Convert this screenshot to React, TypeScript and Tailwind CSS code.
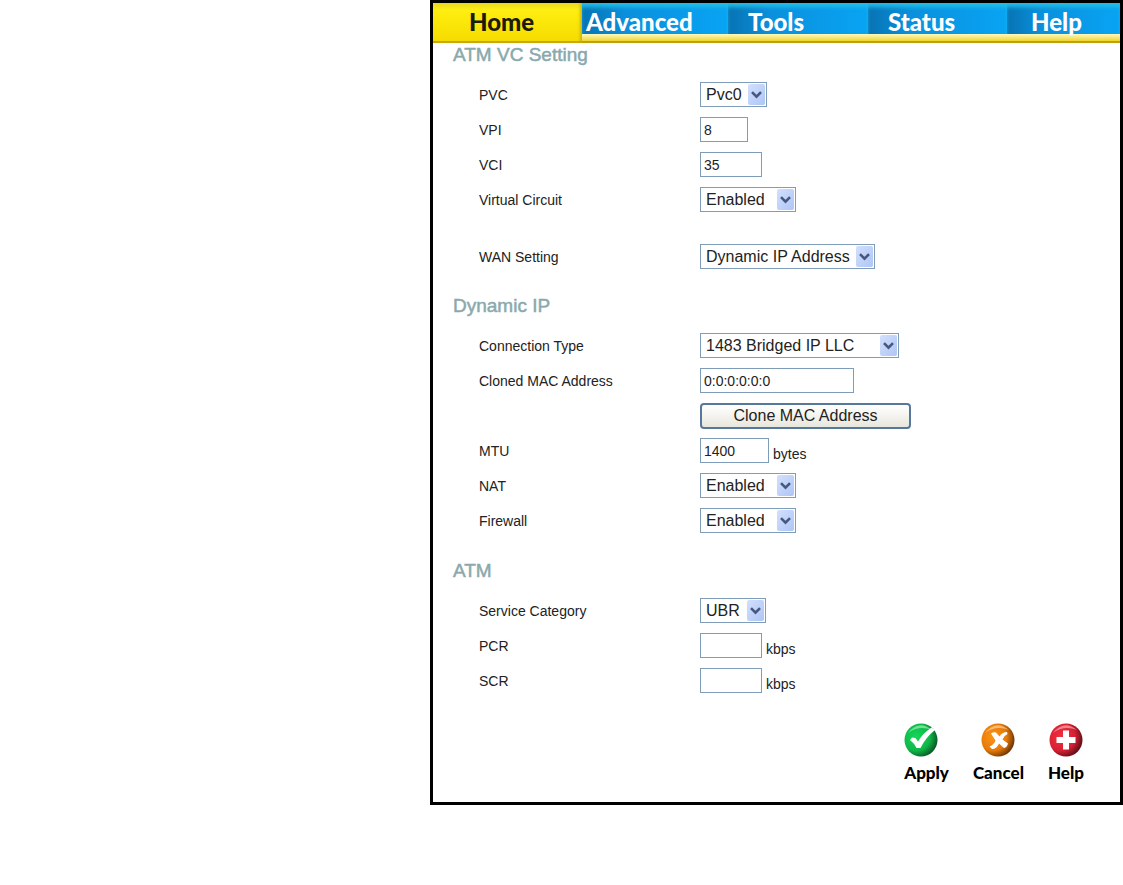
import type { ReactNode } from "react";

const tabs = [
  { label: "Advanced", className: "pl-1" },
  { label: "Tools", className: "pl-5" },
  { label: "Status", className: "pl-5" },
  { label: "Help", className: "pl-6" },
];

const Heading = ({ children }: { children: ReactNode }) => (
  <h2 className="mb-[11px] text-[19px] leading-[23px] text-[#8aa9ac] [-webkit-text-stroke:0.5px_#8aa9ac]">
    {children}
  </h2>
);

const Row = ({
  id,
  label,
  children,
}: {
  id?: string;
  label?: string;
  children: ReactNode;
}) => (
  <div className="flex h-[35px] items-center pl-[26px]">
    <div className="w-[221px] shrink-0">
      {label && <label htmlFor={id}>{label}</label>}
    </div>
    {children}
  </div>
);

const Select = ({
  id,
  value,
  className,
}: {
  id: string;
  value: string;
  className: string;
}) => (
  <div className={`relative ${className}`}>
    <select
      id={id}
      className="h-[25px] w-full appearance-none border border-[#7f9db9] bg-white pl-[5px] text-base leading-5 text-[#222]"
    >
      <option>{value}</option>
    </select>
    <span className="pointer-events-none absolute top-[2px] right-[2px] flex h-[21px] w-[17px] items-center justify-center rounded-xs bg-gradient-to-br from-[#d3e0fd] to-[#aec5f5]">
      <svg width="11" height="8" viewBox="0 0 11 8" fill="none">
        <path d="M1 1.2 L5.5 5.7 L10 1.2" stroke="#47587f" strokeWidth="2.6" />
      </svg>
    </span>
  </div>
);

const TextBox = ({
  id,
  value,
  className,
}: {
  id: string;
  value?: string;
  className: string;
}) => (
  <input
    id={id}
    type="text"
    defaultValue={value}
    className={`h-[25px] border border-[#7f9db9] bg-white px-[3px] text-sm text-[#222] ${className}`}
  />
);

const Unit = ({ children }: { children: ReactNode }) => (
  <span className="pt-[6px] pl-1">{children}</span>
);

const ApplyIcon = () => (
  <svg width="34" height="34" viewBox="0 0 34 34">
    <defs>
      <radialGradient id="green" cx="0.35" cy="0.4" r="0.7">
        <stop offset="0" stopColor="#12d858" />
        <stop offset="0.6" stopColor="#0fb848" />
        <stop offset="1" stopColor="#0a4a20" />
      </radialGradient>
    </defs>
    <circle cx="17" cy="17" r="16.5" fill="url(#green)" />
    <path d="M4 10 Q15 -4 28 7 Q15 2 4 10" fill="#b5f5c8" opacity="0.6" />
    <path
      d="M6 17 L8 14.5 L11.5 15 L14 18.5 Q19 10 27.5 4.5 L31 7 Q22 14 16.5 25 L12.5 25 Q10 20 6 17 Z"
      fill="#fff"
    />
  </svg>
);

const CancelIcon = () => (
  <svg width="34" height="34" viewBox="0 0 34 34">
    <defs>
      <radialGradient id="orange" cx="0.35" cy="0.4" r="0.7">
        <stop offset="0" stopColor="#fb9418" />
        <stop offset="0.6" stopColor="#e67a08" />
        <stop offset="1" stopColor="#5c2c05" />
      </radialGradient>
    </defs>
    <circle cx="17" cy="17" r="16.5" fill="url(#orange)" />
    <path d="M4 10 Q15 -4 28 7 Q15 2 4 10" fill="#ffe0b0" opacity="0.6" />
    <path
      d="M10 10.5 Q13 8.5 15 9.5 L18.5 13.5 Q21 9 26 9 L26.5 11 Q23 12.5 21.5 16.5 L27 20.5 Q26 24.5 23 25 L18 20.5 Q15.5 26 11 26 L8.5 23.5 Q13 21.5 14.5 17.5 Z"
      fill="#fff"
    />
  </svg>
);

const HelpIcon = () => (
  <svg width="34" height="34" viewBox="0 0 34 34">
    <defs>
      <radialGradient id="red" cx="0.35" cy="0.4" r="0.7">
        <stop offset="0" stopColor="#f03040" />
        <stop offset="0.6" stopColor="#d82033" />
        <stop offset="1" stopColor="#4d0c14" />
      </radialGradient>
    </defs>
    <circle cx="17" cy="17" r="16.5" fill="url(#red)" />
    <path d="M4 10 Q15 -4 28 7 Q15 2 4 10" fill="#ffc0c8" opacity="0.6" />
    <path
      d="M14 7.5 H20 V14 H26.5 V20 H20 V26.5 H14 V20 H7.5 V14 H14 Z"
      fill="#fff"
    />
  </svg>
);

const actionClass =
  "flex flex-col gap-[6px] font-['Lato',sans-serif] text-[17px] leading-5 font-black text-black";

export default function App() {
  return (
    <div className="min-h-screen bg-white pl-[430px] font-['Liberation_Sans',sans-serif] text-sm text-[#222]">
      <main className="border-3 border-black">
        <nav className="grid grid-cols-[149fr_538fr] font-['Lato',sans-serif] text-2xl leading-[38px] font-black">
          <a
            href="#home"
            className="border-b-2 border-[#c9a800] bg-gradient-to-b from-[#e8d820] via-[#ffee10] via-20% to-[#f5dc00] pl-9 text-[#1c1a08] shadow-[inset_-4px_0_3px_-2px_#c9b414]"
          >
            Home
          </a>
          <div>
            <div className="grid grid-cols-[146fr_140fr_139fr_113fr] grid-rows-[31px] text-white">
              {tabs.map((tab) => (
                <a
                  key={tab.label}
                  href={`#${tab.label.toLowerCase()}`}
                  className={`bg-gradient-to-r from-[#0873b4] via-[#0a90dc] via-30% to-[#08a4f4] shadow-[inset_0_5px_4px_-1px_#22bde8] ${tab.className}`}
                >
                  {tab.label}
                </a>
              ))}
            </div>
            <div className="h-[9px] border-b-2 border-[#c0a008] bg-gradient-to-b from-[#fff9b8] to-[#eed51c]" />
          </div>
        </nav>

        <form className="px-5" onSubmit={(e) => e.preventDefault()}>
          <section>
            <Heading>ATM VC Setting</Heading>
            <Row id="pvc" label="PVC">
              <Select id="pvc" value="Pvc0" className="w-[67px]" />
            </Row>
            <Row id="vpi" label="VPI">
              <TextBox id="vpi" value="8" className="w-12" />
            </Row>
            <Row id="vci" label="VCI">
              <TextBox id="vci" value="35" className="w-[62px]" />
            </Row>
            <Row id="circuit" label="Virtual Circuit">
              <Select id="circuit" value="Enabled" className="w-24" />
            </Row>
            <div className="mt-[22px]">
              <Row id="wan" label="WAN Setting">
                <Select
                  id="wan"
                  value="Dynamic IP Address"
                  className="w-[175px]"
                />
              </Row>
            </div>
          </section>

          <section className="mt-5">
            <Heading>Dynamic IP</Heading>
            <Row id="connection" label="Connection Type">
              <Select
                id="connection"
                value="1483 Bridged IP LLC"
                className="w-[199px]"
              />
            </Row>
            <Row id="mac" label="Cloned MAC Address">
              <TextBox id="mac" value="0:0:0:0:0:0" className="w-[154px]" />
            </Row>
            <Row>
              <button
                type="button"
                className="h-[26px] w-[211px] rounded-[4px] border-2 border-[#56789a] bg-gradient-to-b from-white to-[#e8e7dd] text-base leading-5"
              >
                Clone MAC Address
              </button>
            </Row>
            <Row id="mtu" label="MTU">
              <TextBox id="mtu" value="1400" className="w-[69px]" />
              <Unit>bytes</Unit>
            </Row>
            <Row id="nat" label="NAT">
              <Select id="nat" value="Enabled" className="w-24" />
            </Row>
            <Row id="firewall" label="Firewall">
              <Select id="firewall" value="Enabled" className="w-24" />
            </Row>
          </section>

          <section className="mt-[21px]">
            <Heading>ATM</Heading>
            <Row id="category" label="Service Category">
              <Select id="category" value="UBR" className="w-[66px]" />
            </Row>
            <Row id="pcr" label="PCR">
              <TextBox id="pcr" className="w-[62px]" />
              <Unit>kbps</Unit>
            </Row>
            <Row id="scr" label="SCR">
              <TextBox id="scr" className="w-[62px]" />
              <Unit>kbps</Unit>
            </Row>
          </section>

          <div className="flex justify-end gap-6 pt-[25px] pr-4 pb-[19px]">
            <button type="submit" className={`items-start ${actionClass}`}>
              <ApplyIcon />
              Apply
            </button>
            <button type="reset" className={`items-center ${actionClass}`}>
              <CancelIcon />
              Cancel
            </button>
            <button type="button" className={`items-center ${actionClass}`}>
              <HelpIcon />
              Help
            </button>
          </div>
        </form>
      </main>
    </div>
  );
}
